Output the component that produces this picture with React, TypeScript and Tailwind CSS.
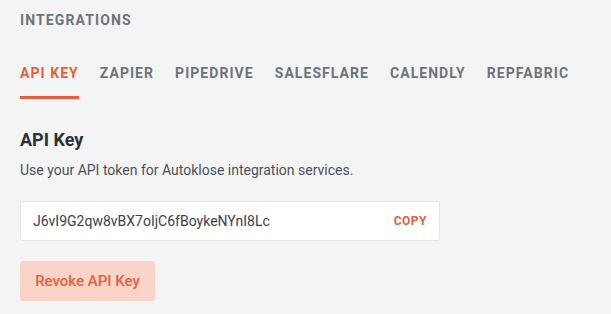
import React from "react";

const tabs = ["API KEY", "ZAPIER", "PIPEDRIVE", "SALESFLARE", "CALENDLY", "REPFABRIC"];

function App() {
  const [active, setActive] = React.useState(0);

  return (
    <div className="min-h-screen w-full bg-[#f4f4f4] px-5 pt-[11px] font-['Roboto',sans-serif]">
      <div className="text-[14px] font-bold tracking-[0.08em] text-[#6b747c] leading-[18px]">
        INTEGRATIONS
      </div>

      <div className="mt-[36px] flex gap-[21px]">
        {tabs.map((t, i) => (
          <button
            key={t}
            onClick={() => setActive(i)}
            className={
              "flex flex-col items-start text-[14px] font-bold tracking-[0.075em] leading-[16px] " +
              (i === active ? "text-[#e4603d]" : "text-[#6b747c]")
            }
          >
            <span>{t}</span>
            <span
              className={
                "mt-[15px] h-[3px] w-full " + (i === active ? "bg-[#e4603d]" : "bg-transparent")
              }
            />
          </button>
        ))}
      </div>

      <h2 className="mt-[30px] text-[18px] font-bold leading-[22px] text-[#2b3338]">API Key</h2>
      <p className="mt-[10px] text-[14px] leading-[18px] text-[#4a5259]">
        Use your API token for Autoklose integration services.
      </p>

      <div className="mt-[22px] flex h-[40px] w-[420px] items-center justify-between rounded-[3px] border border-[#e3e3e3] bg-white pl-[12px] pr-[12px]">
        <span className="text-[14px] text-[#3a4248]">J6vI9G2qw8vBX7oIjC6fBoykeNYnI8Lc</span>
        <button className="text-[12px] font-bold tracking-[0.04em] text-[#e4603d]">COPY</button>
      </div>

      <button className="mt-[20px] h-[40px] w-[135px] rounded-[3px] bg-[#fad4c9] text-[15px] font-medium text-[#e4603d]">
        Revoke API Key
      </button>
    </div>
  );
}

export default App;
